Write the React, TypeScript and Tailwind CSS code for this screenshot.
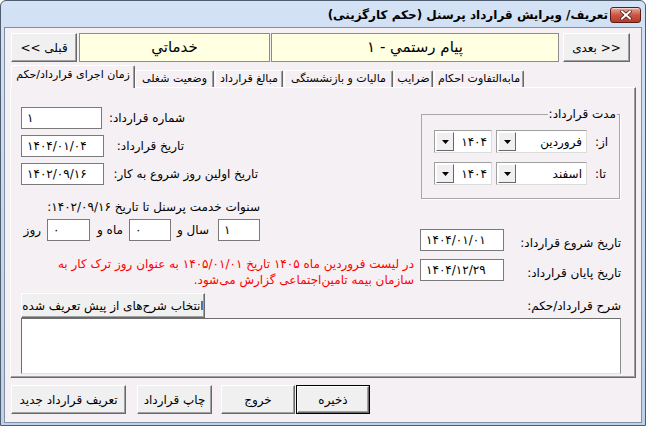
import React from "react";

const raised =
  "bg-[#f0f0f0] border border-t-[#ffffff] border-l-[#ffffff] border-r-[#696969] border-b-[#696969] shadow-[inset_-1px_-1px_0_#a0a0a0]";

function Btn({ className = "", children }: { className?: string; children: React.ReactNode }) {
  return (
    <div
      dir="rtl"
      className={`flex items-center justify-center text-[12px] whitespace-nowrap ${raised} ${className}`}
    >
      {children}
    </div>
  );
}

function Field({ className = "", children }: { className?: string; children: React.ReactNode }) {
  return (
    <div
      dir="ltr"
      className={`h-[22px] shrink-0 bg-white border border-[#7a7a7a] flex items-center pl-[5px] text-[12px] ${className}`}
    >
      {children}
    </div>
  );
}

function Combo({ className = "", text }: { className?: string; text: string }) {
  return (
    <div
      className={`h-[23px] shrink-0 bg-white border border-t-[#a0a0a0] border-l-[#a0a0a0] border-r-[#dcdcdc] border-b-[#dcdcdc] flex items-stretch p-[1px] ${className}`}
    >
      <div className="w-[18px] bg-[#f0f0f0] border border-t-white border-l-white border-r-[#696969] border-b-[#696969] flex items-center justify-center">
        <svg width="7" height="4" viewBox="0 0 7 4">
          <path d="M0 0h7L3.5 4z" fill="#000" />
        </svg>
      </div>
      <div dir="rtl" className="flex-1 flex items-center pr-[3px] text-[12px] whitespace-nowrap">
        {text}
      </div>
    </div>
  );
}

function Tab({ className = "", children }: { className?: string; children: React.ReactNode }) {
  return (
    <div
      dir="rtl"
      className={`h-[17px] flex items-center justify-center text-[11px] whitespace-nowrap border-t border-l border-r border-t-white border-l-white border-r-[#696969] shadow-[inset_-1px_0_0_#a0a0a0] rounded-t-[2px] ${className}`}
    >
      {children}
    </div>
  );
}

export default function App() {
  return (
    <div className="w-[646px] h-[426px] overflow-hidden bg-white">
      <div className="w-[646px] h-[426px] flex flex-col border border-[#4f5d6f] rounded-t-[6px] bg-gradient-to-b from-[#d3e2f4] to-[#bcd1ea] font-['DejaVu_Sans',sans-serif] text-black">
        {/* Title bar */}
        <div className="h-[26px] shrink-0 flex items-start justify-end pr-[4px] pt-[6px] gap-[2px]">
          <div dir="rtl" className="text-[12px] font-bold leading-[16px] whitespace-nowrap">
            تعریف/ ویرایش قرارداد پرسنل (حکم کارگزینی)
          </div>
          <div className="w-[31px] h-[16px] rounded-[3px] border border-[#5a1e16] bg-gradient-to-b from-[#e9a99a] via-[#cc5544] to-[#b53b2a] flex items-center justify-center shadow-[inset_0_1px_0_rgba(255,255,255,0.5)]">
            <svg width="12" height="10" viewBox="0 0 12 10">
              <path d="M2 1.5l8 7M10 1.5l-8 7" stroke="#3a1410" strokeWidth="3.4" strokeLinecap="square" />
              <path d="M2 1.5l8 7M10 1.5l-8 7" stroke="#ffffff" strokeWidth="2" strokeLinecap="square" />
            </svg>
          </div>
        </div>

        {/* Client area */}
        <div className="mx-[3px] mb-[2px] flex-1 border border-[#7f8fa6] bg-[#f4f0f4] flex flex-col">
          {/* Top row */}
          <div className="mt-[5px] pl-[6px] h-[29px] flex">
            <Btn className="w-[66px] h-[29px]">قبلی &gt;&gt;</Btn>
            <div
              dir="rtl"
              className="ml-[2px] w-[191px] h-[29px] bg-[#ffffe1] border border-[#8c8c8c] flex items-center justify-center text-[15px]"
            >
              خدماتي
            </div>
            <div
              dir="rtl"
              className="ml-[1px] w-[288px] h-[29px] bg-[#ffffe1] border border-[#8c8c8c] flex items-center justify-center text-[15px] whitespace-nowrap"
            >
              پیام رستمي - ۱
            </div>
            <Btn className="ml-[4px] w-[67px] h-[29px]">&lt;&lt; بعدی</Btn>
          </div>

          {/* Tabs */}
          <div className="mt-[3px] h-[22px] pl-[6px] flex items-end">
            <div
              dir="rtl"
              className="relative z-10 -mb-[1px] w-[124px] h-[23px] pb-[3px] flex items-center justify-center text-[11px] whitespace-nowrap bg-[#f4f0f4] border-t border-l border-r border-t-white border-l-white border-r-[#696969] shadow-[inset_-1px_0_0_#a0a0a0] rounded-t-[2px]"
            >
              زمان اجرای قرارداد/حکم
            </div>
            <Tab className="w-[79px]">وضعیت شغلی</Tab>
            <Tab className="ml-[1px] w-[68px]">مبالغ قرارداد</Tab>
            <Tab className="ml-[1px] w-[109px]">مالیات و بازنشستگی</Tab>
            <Tab className="ml-[1px] w-[39px]">ضرایب</Tab>
            <Tab className="ml-[1px] w-[90px]">مابه‌التفاوت احکام</Tab>
          </div>

          {/* Tab panel */}
          <div className="ml-[5px] w-[626px] h-[291px] border border-t-white border-l-white border-r-[#696969] border-b-[#696969] shadow-[inset_-1px_-1px_0_#a0a0a0] pl-[10px] pr-[14px] pt-[19px] flex flex-col">
            <div className="flex justify-between items-start">
              {/* Left part */}
              <div className="w-[393px] shrink-0 flex flex-col items-start">
                <div className="flex">
                  <Field className="w-[81px]">۱</Field>
                  <div dir="rtl" className="w-[83px] h-[22px] flex items-center text-[12px] whitespace-nowrap">
                    شماره قرارداد:
                  </div>
                </div>
                <div className="mt-[6px] flex">
                  <Field className="w-[83px]">۱۴۰۴/۰۱/۰۴</Field>
                  <div dir="rtl" className="w-[80px] h-[22px] flex items-center text-[12px] whitespace-nowrap">
                    تاریخ قرارداد:
                  </div>
                </div>
                <div className="mt-[6px] flex">
                  <Field className="w-[83px]">۱۴۰۲/۰۹/۱۶</Field>
                  <div dir="rtl" className="w-[154px] h-[22px] flex items-center text-[12px] whitespace-nowrap">
                    تاریخ اولین روز شروع به کار:
                  </div>
                </div>
                <div dir="rtl" className="mt-[14px] w-[239px] h-[16px] leading-[16px] text-[12px] whitespace-nowrap">
                  سنوات خدمت پرسنل تا تاریخ ۱۴۰۲/۰۹/۱۶:
                </div>
                <div className="mt-[4px] flex items-center h-[22px] text-[12px] whitespace-nowrap">
                  <div dir="rtl" className="ml-[6px] w-[14px] text-center">روز</div>
                  <Field className="ml-[6px] w-[43px]">۰</Field>
                  <div dir="rtl" className="ml-[6px] w-[28px] text-center">ماه و</div>
                  <Field className="ml-[5px] w-[42px]">۰</Field>
                  <div dir="rtl" className="ml-[2px] w-[40px] text-center">سال و</div>
                  <Field className="ml-[5px] w-[42px]">۱</Field>
                </div>
                <div dir="rtl" className="mt-[15px] w-[393px] text-right text-[12px] leading-[16px] text-[#ff0000] whitespace-nowrap">
                  <div>در لیست فروردین ماه ۱۴۰۵ تاریخ ۱۴۰۵/۰۱/۰۱ به عنوان روز ترک کار به</div>
                  <div>سازمان بیمه تامین‌اجتماعی گزارش می‌شود.</div>
                </div>
              </div>

              {/* Right part */}
              <div className="w-[201px] shrink-0 flex flex-col">
                <fieldset
                  dir="rtl"
                  className="ml-[1px] w-[199px] border border-[#a8a8a8] shadow-[1px_1px_0_#ffffff] pt-[9px] pb-[13px]"
                >
                  <legend className="mr-[2px] px-[1px] text-[12px] leading-[14px] whitespace-nowrap">مدت قرارداد:</legend>
                  <div dir="ltr" className="flex items-center pl-[12px]">
                    <Combo className="w-[58px]" text="۱۴۰۴" />
                    <Combo className="ml-[4px] w-[91px]" text="فروردین" />
                    <div dir="rtl" className="ml-[8px] text-[12px]">از:</div>
                  </div>
                  <div dir="ltr" className="mt-[9px] flex items-center pl-[12px]">
                    <Combo className="w-[58px]" text="۱۴۰۴" />
                    <Combo className="ml-[4px] w-[91px]" text="اسفند" />
                    <div dir="rtl" className="ml-[8px] text-[12px]">تا:</div>
                  </div>
                </fieldset>
                <div className="mt-[29px] flex items-center">
                  <Field className="w-[84px]">۱۴۰۴/۰۱/۰۱</Field>
                  <div dir="rtl" className="flex-1 text-[12px] whitespace-nowrap pt-[6px]">
                    تاریخ شروع قرارداد:
                  </div>
                </div>
                <div className="mt-[6px] flex items-center">
                  <Field className="w-[84px]">۱۴۰۴/۱۲/۲۹</Field>
                  <div dir="rtl" className="flex-1 text-[12px] whitespace-nowrap pt-[6px]">
                    تاریخ پایان قرارداد:
                  </div>
                </div>
              </div>
            </div>

            {/* Description row */}
            <div className="mt-[5px] flex items-center justify-between">
              <Btn className="w-[184px] h-[25px] text-[11px]">انتخاب شرح‌های از پیش تعریف شده</Btn>
              <div dir="rtl" className="text-[12px] whitespace-nowrap">شرح قرارداد/حکم:</div>
            </div>
            <div className="w-[600px] h-[56px] bg-white border border-t-[#6e6e6e] border-l-[#6e6e6e] border-r-[#8a8a8a] border-b-[#e0e0e0]" />
          </div>

          {/* Bottom buttons */}
          <div className="mt-[7px] pl-[6px] flex">
            <Btn className="w-[115px] h-[29px]">تعریف قرارداد جدید</Btn>
            <Btn className="ml-[11px] w-[75px] h-[29px]">چاپ قرارداد</Btn>
            <Btn className="ml-[9px] w-[74px] h-[29px]">خروج</Btn>
            <div className="ml-[1px] w-[74px] h-[29px] border border-black">
              <Btn className="w-full h-full">ذخیره</Btn>
            </div>
          </div>
        </div>
      </div>
    </div>
  );
}
